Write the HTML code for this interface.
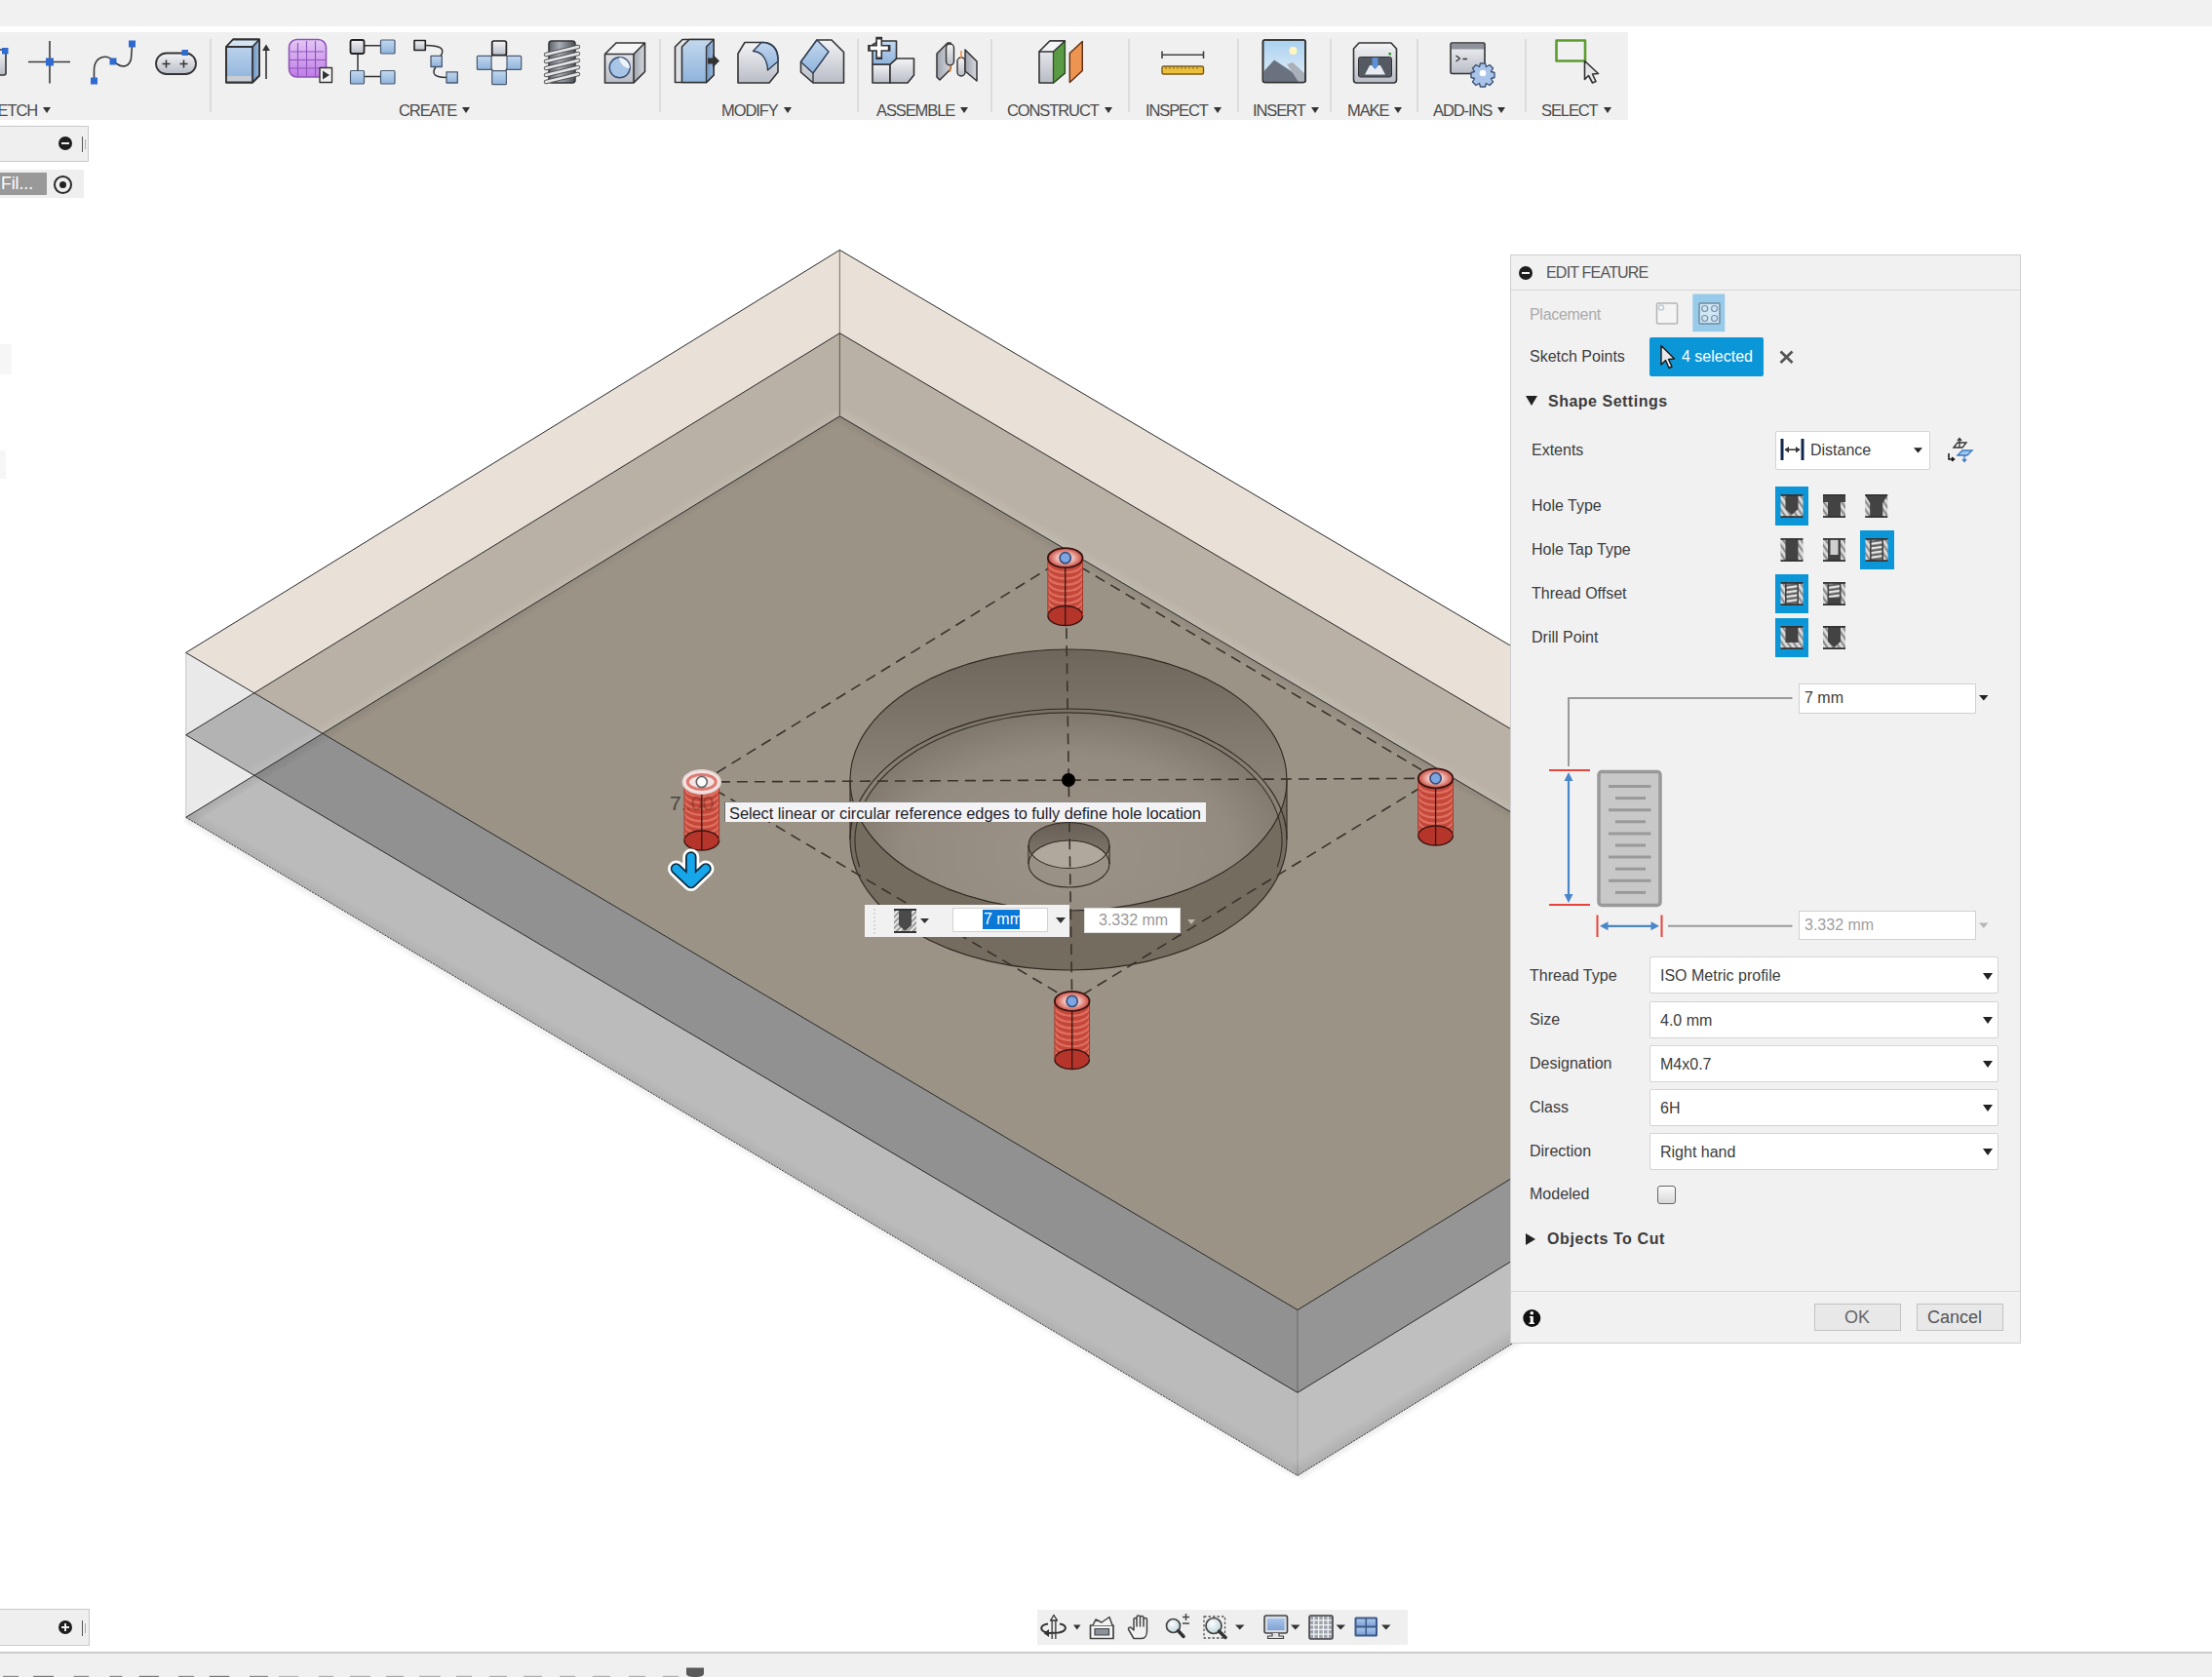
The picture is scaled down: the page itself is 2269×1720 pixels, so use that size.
<!DOCTYPE html>
<html><head><meta charset="utf-8">
<style>
html,body{margin:0;padding:0;}
body{width:2269px;height:1720px;overflow:hidden;position:relative;background:#ffffff;font-family:"Liberation Sans",sans-serif;}
.a{position:absolute;}
.topbar{left:0;top:0;width:2269px;height:27px;background:#f1f1f1;}
.tb{left:0;top:33px;width:1670px;height:90px;background:#f0f0f0;}
.sep{position:absolute;top:40px;width:2px;height:75px;background:#dcdcdc;}
.lbl{position:absolute;top:104px;font-size:16.5px;color:#4a4a4a;white-space:nowrap;letter-spacing:-1.1px;line-height:18px;}
.tri{display:inline-block;width:0;height:0;border-left:4.5px solid transparent;border-right:4.5px solid transparent;border-top:6px solid #333;margin-left:6px;vertical-align:3px;}
.dlg{left:1549px;top:261px;width:524px;height:1117px;background:#f1f1f1;border:1px solid #cfcfcf;box-sizing:border-box;}
.dl{position:absolute;font-size:16px;color:#3c3c3c;white-space:nowrap;line-height:18px;}
.dd{position:absolute;left:1692px;width:358px;height:38px;background:#fff;border:1px solid #d4d4d4;box-sizing:border-box;border-radius:2px;}
.dd span{position:absolute;left:10px;top:10px;font-size:16px;color:#3c3c3c;line-height:18px;}
.dtri{position:absolute;width:0;height:0;border-left:5px solid transparent;border-right:5px solid transparent;border-top:7px solid #222;}
</style></head>
<body>
<div class="a topbar"></div>
<div class="a tb"></div>
<div class="sep" style="left:215px"></div>
<div class="sep" style="left:676px"></div>
<div class="sep" style="left:879px"></div>
<div class="sep" style="left:1016px"></div>
<div class="sep" style="left:1157px"></div>
<div class="sep" style="left:1269px"></div>
<div class="sep" style="left:1364px"></div>
<div class="sep" style="left:1453px"></div>
<div class="sep" style="left:1564px"></div>

<div class="lbl" style="left:-2.5px">ETCH<i class="tri"></i></div>
<div class="lbl" style="left:409px">CREATE<i class="tri"></i></div>
<div class="lbl" style="left:740px">MODIFY<i class="tri"></i></div>
<div class="lbl" style="left:899px">ASSEMBLE<i class="tri"></i></div>
<div class="lbl" style="left:1033px">CONSTRUCT<i class="tri"></i></div>
<div class="lbl" style="left:1175px">INSPECT<i class="tri"></i></div>
<div class="lbl" style="left:1285px">INSERT<i class="tri"></i></div>
<div class="lbl" style="left:1382px">MAKE<i class="tri"></i></div>
<div class="lbl" style="left:1470px">ADD-INS<i class="tri"></i></div>
<div class="lbl" style="left:1581px">SELECT<i class="tri"></i></div>

<svg class="a" style="left:0;top:0" width="1670" height="100" viewBox="0 0 1670 100">
<defs>
 <linearGradient id="gb" x1="0" y1="0" x2="0" y2="1"><stop offset="0" stop-color="#c3d8ee"/><stop offset="1" stop-color="#8fb3dc"/></linearGradient>
 <linearGradient id="gbs" x1="0" y1="0" x2="1" y2="0"><stop offset="0" stop-color="#6f93c0"/><stop offset="1" stop-color="#9dbbe0"/></linearGradient>
 <linearGradient id="gg" x1="0" y1="0" x2="0" y2="1"><stop offset="0" stop-color="#f4f4f6"/><stop offset="1" stop-color="#b8bcc6"/></linearGradient>
 <linearGradient id="ggs" x1="0" y1="0" x2="1" y2="0"><stop offset="0" stop-color="#9ea3ad"/><stop offset="1" stop-color="#d8dae0"/></linearGradient>
 <linearGradient id="gp" x1="0" y1="0" x2="0" y2="1"><stop offset="0" stop-color="#e3c8f5"/><stop offset="1" stop-color="#c07be8"/></linearGradient>
 <linearGradient id="gd" x1="0" y1="0" x2="1" y2="0"><stop offset="0" stop-color="#5a5f68"/><stop offset="0.4" stop-color="#a8adb6"/><stop offset="1" stop-color="#4b4f56"/></linearGradient>
 <linearGradient id="gsky" x1="0" y1="0" x2="0" y2="1"><stop offset="0" stop-color="#a9d1f0"/><stop offset="1" stop-color="#e6f0f8"/></linearGradient>
</defs>
<g stroke-linejoin="round">
<!-- partial sketch icon -->
<rect x="-10" y="51" width="16" height="26" rx="2" fill="url(#gg)" stroke="#333" stroke-width="1.6"/>
<rect x="2" y="49" width="6.5" height="6.5" fill="#2f6ad0"/>
<!-- point -->
<line x1="29" y1="63.5" x2="72" y2="63.5" stroke="#3a3a3a" stroke-width="1.6"/>
<line x1="51" y1="42" x2="51" y2="85.5" stroke="#3a3a3a" stroke-width="1.6"/>
<rect x="47" y="59.5" width="8" height="8" fill="#2f6ad0"/>
<!-- spline -->
<path d="M96.5,83 L96.5,72 C96.5,62 103,57 110,58.5 C114,59.5 116,62 120,65.5 C126,70 133,68 134.5,60 L135.6,45" fill="none" stroke="#3a3a3a" stroke-width="1.6"/>
<rect x="93" y="79.5" width="7" height="7" fill="#2f6ad0"/>
<rect x="112.5" y="59.5" width="7" height="7" fill="#2f6ad0"/>
<rect x="132" y="41.5" width="7" height="7" fill="#2f6ad0"/>
<!-- slot -->
<rect x="160" y="54.5" width="41" height="21.5" rx="10.7" fill="url(#gg)" stroke="#333" stroke-width="1.8"/>
<path d="M166.5,65.5 h8 M170.5,61.5 v8 M184.5,65.5 h8 M188.5,61.5 v8" stroke="#333" stroke-width="1.5"/>
<rect x="186.5" y="51" width="6.5" height="6" fill="#2f6ad0"/>
<!-- extrude -->
<path d="M232,48 L239,40.5 L266,40.5 L266,77.5 L259,84.5 L232,84.5 Z" fill="url(#gb)" stroke="#333" stroke-width="1.8"/>
<path d="M232,48 L239,40.5 L266,40.5 L259,48 Z" fill="#d4e3f3"/>
<path d="M259,48 L266,40.5 L266,77.5 L259,84.5 Z" fill="url(#gbs)"/>
<path d="M232,78 L259,78 L259,84.5 L232,84.5 Z" fill="#c9cdd4"/>
<path d="M232,48 L239,40.5 L266,40.5 L266,77.5 L259,84.5 L232,84.5 Z M232,48 L259,48 L266,40.5 M259,48 L259,84.5" fill="none" stroke="#333" stroke-width="1.8"/>
<path d="M273,81 L273,47.5" stroke="#333" stroke-width="1.6"/><path d="M269,52 L273,45.5 L277,52 Z" fill="#333"/>
<!-- form -->
<rect x="296.5" y="40.5" width="38" height="38.5" rx="8" fill="url(#gp)" stroke="#8e55b8" stroke-width="1.6"/>
<path d="M305.5,44 v34 M314.5,42 v37 M323.5,42 v37 M298,53 h34 M297,61.5 h37 M297,70 h37" stroke="#8e55b8" stroke-width="1.1"/>
<rect x="328" y="69.5" width="12.5" height="15" fill="#f1f1f1" stroke="#333" stroke-width="1.4"/>
<path d="M331,72.5 L338,77 L331,81.5 Z" fill="#333"/>
<!-- rect pattern -->
<path d="M373,46.8 H391 M367,55 V73 M373,78.5 H391" stroke="#333" stroke-width="1.5"/>
<rect x="359.5" y="41" width="14" height="14" rx="2" fill="url(#gg)" stroke="#222" stroke-width="1.8"/>
<rect x="390.5" y="41" width="14.5" height="14" rx="1" fill="url(#gb)" stroke="#4a5a70" stroke-width="1.2"/>
<rect x="359.5" y="72.5" width="14" height="13.5" rx="1" fill="url(#gb)" stroke="#4a5a70" stroke-width="1.2"/>
<rect x="390.5" y="72.5" width="14.5" height="13.5" rx="1" fill="url(#gb)" stroke="#4a5a70" stroke-width="1.2"/>
<!-- path pattern -->
<path d="M436,46.5 C452,46.5 457,50 452,57.5 M447,68.5 C442,76 446,79.5 458,79.5" fill="none" stroke="#333" stroke-width="1.5"/>
<rect x="425" y="41.5" width="11.3" height="10" fill="url(#gg)" stroke="#222" stroke-width="1.6"/>
<rect x="442" y="57.3" width="11.3" height="11.2" fill="url(#gb)" stroke="#4a5a70" stroke-width="1.3"/>
<rect x="458" y="73.8" width="11.3" height="11.2" fill="url(#gb)" stroke="#4a5a70" stroke-width="1.3"/>
<!-- circular pattern -->
<path d="M512,50 L527,64 L512,79 L497,64 Z" fill="none" stroke="#333" stroke-width="1.5"/>
<rect x="504.7" y="42" width="14.7" height="14.7" rx="2" fill="url(#gg)" stroke="#222" stroke-width="1.7"/>
<rect x="489.4" y="57.3" width="14.7" height="14.1" rx="1" fill="url(#gb)" stroke="#4a5a70" stroke-width="1.2"/>
<rect x="520" y="57.3" width="14.7" height="14.1" rx="1" fill="url(#gb)" stroke="#4a5a70" stroke-width="1.2"/>
<rect x="504.7" y="72.6" width="14.7" height="14.1" rx="1" fill="url(#gb)" stroke="#4a5a70" stroke-width="1.2"/>
<!-- coil -->
<rect x="563" y="42" width="27" height="43" rx="3" fill="url(#gd)" stroke="#333" stroke-width="1.5"/>
<path d="M560,56 L593,48 M560,63 L593,55 M560,70 L593,62 M560,77 L593,69 M560,84 L593,76" stroke="#555" stroke-width="4.5" stroke-linecap="round"/>
<path d="M560,56 L593,48 M560,63 L593,55 M560,70 L593,62 M560,77 L593,69 M560,84 L593,76" stroke="#e4e6ea" stroke-width="2.6" stroke-linecap="round"/>
<!-- hole cube -->
<path d="M620.5,55.5 L632,44 L661.5,44 L661.5,73.5 L650,85 L620.5,85 Z" fill="url(#gg)"/>
<path d="M650,55.5 L661.5,44 L661.5,73.5 L650,85 Z" fill="url(#ggs)"/>
<path d="M620.5,55.5 L632,44 L661.5,44 L650,55.5 Z" fill="#f6f6f8"/>
<path d="M620.5,55.5 L632,44 L661.5,44 L661.5,73.5 L650,85 L620.5,85 Z M620.5,55.5 L650,55.5 L661.5,44 M650,55.5 V85" fill="none" stroke="#333" stroke-width="1.6"/>
<circle cx="635.7" cy="69.3" r="10.5" fill="#a9c5e6" stroke="#3c5378" stroke-width="1.5"/>
<path d="M635,59 C641,59 646,64 646,70 C641,70 636,66 635,59 Z" fill="#eef3f9"/>
<!-- press pull -->
<path d="M692.5,48 L700,40.5 L732,40.5 L732,77 L724.5,84.5 L692.5,84.5 Z" fill="#dfe1e5" stroke="#333" stroke-width="1.6"/>
<path d="M699.5,48 L707,40.5 L732,40.5 L732,77 L724.5,84.5 L699.5,84.5 Z" fill="url(#gb)" stroke="#333" stroke-width="1.6"/>
<path d="M724.5,48 L732,40.5 L732,77 L724.5,84.5 Z" fill="url(#gbs)" stroke="#333" stroke-width="1.3"/>
<path d="M726,59.5 H731 V55.5 L738,62.5 L731,69.5 V65.5 H726 Z" fill="#333"/>
<!-- fillet -->
<path d="M757,55 L764,43.5 L783,43.5 C792,43.5 798,50 798,60 L798,74 L789,85 L757,85 Z" fill="url(#gg)" stroke="#333" stroke-width="1.6"/>
<path d="M772.5,52.5 L781,43.5 C792,43.5 798,50 798,63 L787.5,72 C787,60 781,53 772.5,52.5 Z" fill="url(#gb)" stroke="#2f3f58" stroke-width="1.4"/>
<!-- chamfer -->
<path d="M821.5,63.5 L838,41 L853,41 L865.5,53.5 L865.5,85 L834,85 L821.5,74 Z" fill="url(#gg)" stroke="#333" stroke-width="1.6"/>
<path d="M821.5,63.5 L838,41 L850,53 L834,75 Z" fill="url(#gb)" stroke="#2f3f58" stroke-width="1.4"/>
<path d="M834,75 V85" stroke="#333" stroke-width="1.3"/>
<!-- new component -->
<path d="M895,66 L913,66 L913,85 L895,85 Z" fill="url(#gg)" stroke="#333" stroke-width="1.6"/>
<path d="M913,66 L920,60 L937.5,60 L937.5,77 L931,85 L913,85 Z" fill="url(#gg)" stroke="#333" stroke-width="1.6"/>
<path d="M895,46 L902,42 L919.5,42 L919.5,60 L913,66 L895,66 Z" fill="url(#gb)" stroke="#333" stroke-width="1.6"/>
<path d="M893.5,49.4 H910 M901.7,41.2 V57.6" stroke="#333" stroke-width="6.8" stroke-linecap="square"/>
<path d="M894.5,49.4 H909 M901.7,42.2 V56.6" stroke="#fff" stroke-width="3.6" stroke-linecap="square"/>
<!-- joint -->
<path d="M961,79 L961,55 L972,44 L975,44 L975,71 L964,82 Z" fill="url(#ggs)" stroke="#333" stroke-width="1.5"/>
<rect x="970.5" y="45" width="8" height="22" rx="4" fill="url(#gg)" stroke="#333" stroke-width="1.4"/>
<rect x="982" y="59" width="8" height="19" rx="4" fill="url(#gg)" stroke="#333" stroke-width="1.4"/>
<path d="M990,51 L1002,63 L1002,83 L990,73 Z" fill="url(#ggs)" stroke="#333" stroke-width="1.5"/>
<path d="M974.5,67 V74 M986,52 V60" stroke="#f08a30" stroke-width="1.5"/>
<!-- construct -->
<path d="M1066,53 L1077,42 L1092.3,42 L1092.3,75 L1080.5,85 L1066,85 Z" fill="url(#gg)" stroke="#333" stroke-width="1.6"/>
<path d="M1080.5,53 L1092.3,42 L1092.3,75 L1080.5,85 Z" fill="#5a9a45" stroke="#2f4f25" stroke-width="1.3"/>
<path d="M1066,53 L1077,42 L1092.3,42 L1080.5,53 Z" fill="#f4f4f6" stroke="#333" stroke-width="1.3"/>
<path d="M1097.3,54.5 L1110.3,42.5 L1110.3,72.5 L1097.3,84.5 Z" fill="#ec9450" stroke="#5a2f18" stroke-width="1.4"/>
<!-- measure -->
<path d="M1192,56.2 H1234.5 M1192,52.5 V60 M1234.5,52.5 V60" stroke="#444" stroke-width="1.6"/>
<rect x="1192" y="68" width="42.5" height="8" rx="1.5" fill="#ecc03a" stroke="#7a5a18" stroke-width="1.4"/>
<path d="M1196,68.5 v2.5 M1200,68.5 v2.5 M1204,68.5 v2.5 M1208,68.5 v2.5 M1212,68.5 v2.5 M1216,68.5 v2.5 M1220,68.5 v2.5 M1224,68.5 v2.5 M1228,68.5 v2.5" stroke="#8a6a20" stroke-width="1"/>
<!-- insert picture -->
<rect x="1295.5" y="41" width="43.5" height="43.5" rx="2" fill="url(#gsky)" stroke="#333" stroke-width="1.6"/>
<circle cx="1326.5" cy="52" r="4" fill="#fff5c0"/>
<path d="M1296.5,73 L1307,61.5 L1323,72 L1338,84 L1296.5,84 Z" fill="#6a7280"/>
<path d="M1320,66 L1326,64 L1338,75 L1338,84 L1332,84 Z" fill="#aab0ba"/>
<rect x="1295.5" y="41" width="43.5" height="43.5" rx="2" fill="none" stroke="#333" stroke-width="1.6"/>
<!-- make -->
<path d="M1388.5,50 L1394,44 L1427,44 L1432.5,50 L1432.5,82 Q1432.5,85 1429.5,85 L1391.5,85 Q1388.5,85 1388.5,82 Z" fill="url(#gg)" stroke="#333" stroke-width="1.6"/>
<rect x="1393.5" y="58.5" width="34" height="20.5" rx="2" fill="#555a62" stroke="#333" stroke-width="1"/>
<path d="M1400,76.5 L1405,67 L1416,67 L1421,76.5 Z" fill="#e8ecf2"/>
<path d="M1407.5,59 h6 v9 l-3,3 l-3,-3 Z" fill="#5c8fd6"/>
<rect x="1424.5" y="54" width="2.5" height="2.5" fill="#2a9a2a"/>
<!-- addins -->
<rect x="1488" y="44" width="35" height="31.5" rx="1.5" fill="url(#gg)" stroke="#333" stroke-width="1.6"/>
<rect x="1489" y="45" width="33" height="5.5" fill="#8d929b"/>
<path d="M1493.5,57 L1497.5,60 L1493.5,63 M1500.5,60.5 h4.5" fill="none" stroke="#333" stroke-width="1.3"/>
<g transform="translate(1521,75)">
<path d="M-2.5,-10 h5 l1,3.5 l3.5,-2 l3.5,3.5 l-2,3.5 l3.5,1 v5 l-3.5,1 l2,3.5 l-3.5,3.5 l-3.5,-2 l-1,3.5 h-5 l-1,-3.5 l-3.5,2 l-3.5,-3.5 l2,-3.5 l-3.5,-1 v-5 l3.5,-1 l-2,-3.5 l3.5,-3.5 l3.5,2 Z" fill="#a9c4e8" stroke="#3c5378" stroke-width="1.4"/>
<circle r="3.3" fill="#fff"/>
</g>
<!-- select -->
<rect x="1596.5" y="41.5" width="29.5" height="21" fill="none" stroke="#5c9c2e" stroke-width="2.6"/>
<path d="M1625.5,62.5 L1625.5,81.5 L1629.5,77.5 L1633.5,85 L1637,83.5 L1633.5,76 L1639.5,75.5 Z" fill="#e6e6ea" stroke="#333" stroke-width="1.6"/>
</g>
</svg>


<!-- left panels -->
<div class="a" style="left:-1px;top:129px;width:92px;height:37px;background:#efefef;border:1px solid #c9c9c9;box-sizing:border-box;"></div>
<div class="a" style="left:60px;top:140px;width:14px;height:14px;border-radius:50%;background:#1e1e1e;"></div>
<div class="a" style="left:63px;top:146px;width:8px;height:2px;background:#efefef;"></div>
<div class="a" style="left:84px;top:140px;width:1px;height:16px;background:#555;"></div>
<div class="a" style="left:87px;top:143px;width:1px;height:10px;background:#aaa;"></div>
<div class="a" style="left:0;top:174px;width:86px;height:29px;background:#efefef;"></div>
<div class="a" style="left:0;top:177px;width:48px;height:23px;background:#999999;"></div>
<div class="a" style="left:1px;top:179px;font-size:17.5px;color:#fff;line-height:18px;">Fil...</div>
<div class="a" style="left:54.5px;top:179.5px;width:19px;height:19px;border-radius:50%;border:2px solid #2a2a2a;box-sizing:border-box;"></div>
<div class="a" style="left:60.5px;top:185.5px;width:7px;height:7px;border-radius:50%;background:#222;"></div>
<div class="a" style="left:0;top:353px;width:12px;height:31px;background:#f6f6f6;"></div>
<div class="a" style="left:0;top:462px;width:6px;height:29px;background:#f6f6f6;"></div>

<!-- model -->
<svg class="a" style="left:0;top:0" width="2269" height="1720" viewBox="0 0 2269 1720">
<polygon points="190.7,669.4 861.4,256.4 2003.4,930.0 2003.4,1100.4 1331.0,1513.4 190.7,838.3" fill="#e9e9e9"/>
<polygon points="190.7,669.4 861.4,256.4 2003.4,930.0 1331.0,1343.5" fill="#e9e1d8"/>
<polygon points="190.7,753.8 861.4,341.7 1331.0,618.6 1331.0,1428.3 1331.0,1428.3" fill="#b3b3b3"/>
<polygon points="1331.0,1428.3 1331.0,618.6 2003.4,1015.2 1331.0,1428.3" fill="#b3b3b3"/>
<polygon points="190.7,838.3 861.4,426.8 1331.0,703.8 1331.0,1513.4 1331.0,1513.4" fill="#bbbbbb"/>
<polygon points="1331.0,1513.4 1331.0,703.8 2003.4,1100.4 1331.0,1513.4" fill="#bfbfbf"/>
<polygon points="260.7,710.8 861.4,341.7 1932.7,973.5 1331.0,1343.5" fill="#b9b1a5"/>
<polygon points="260.8,795.3 861.4,426.8 1331.0,703.8 1331.0,1428.3 1331.0,1428.3" fill="#919191"/>
<polygon points="1331.0,1428.3 1331.0,703.8 1932.6,1058.7 1331.0,1428.3" fill="#959595"/>
<polygon points="330.9,752.3 861.4,426.8 1862.0,1017.0 1331.0,1343.5" fill="#9b9386"/>
<line x1="190.7" y1="669.4" x2="190.7" y2="838.3" stroke="#cfcfcf" stroke-width="1.2"/>
<line x1="861.4" y1="256.4" x2="861.4" y2="341.7" stroke="#8a8176" stroke-width="1.2"/>
<line x1="861.4" y1="341.7" x2="861.4" y2="426.8" stroke="#6e665c" stroke-width="1.2"/>
<line x1="1331.0" y1="1343.5" x2="1331.0" y2="1428.3" stroke="#6f6f6f" stroke-width="1.2"/>
<line x1="1331.0" y1="1428.3" x2="1331.0" y2="1513.4" stroke="#a8a8a8" stroke-width="1.2"/>
<linearGradient id="bs1" gradientUnits="userSpaceOnUse" x1="760.9" y1="1175.8" x2="767.0" y2="1165.5"><stop offset="0" stop-color="#000" stop-opacity="0.06"/><stop offset="1" stop-color="#000" stop-opacity="0"/></linearGradient>
<polygon points="190.7,838.3 1331.0,1513.4 1337.1,1503.1 196.8,828.0" fill="url(#bs1)"/>
<linearGradient id="bs2" gradientUnits="userSpaceOnUse" x1="1667.2" y1="1306.9" x2="1658.8" y2="1293.3"><stop offset="0" stop-color="#000" stop-opacity="0.09"/><stop offset="1" stop-color="#000" stop-opacity="0"/></linearGradient>
<polygon points="1331.0,1513.4 2003.4,1100.4 1995.0,1086.8 1322.6,1499.8" fill="url(#bs2)"/>
<linearGradient id="os1" gradientUnits="userSpaceOnUse" x1="760.9" y1="1175.8" x2="757.3" y2="1181.9"><stop offset="0" stop-color="#000" stop-opacity="0.07"/><stop offset="1" stop-color="#000" stop-opacity="0"/></linearGradient>
<polygon points="190.7,838.3 1331.0,1513.4 1327.4,1519.4 187.1,844.3" fill="url(#os1)"/>
<linearGradient id="os2" gradientUnits="userSpaceOnUse" x1="1667.2" y1="1306.9" x2="1670.9" y2="1312.9"><stop offset="0" stop-color="#000" stop-opacity="0.08"/><stop offset="1" stop-color="#000" stop-opacity="0"/></linearGradient>
<polygon points="1331.0,1513.4 2003.4,1100.4 2007.1,1106.4 1334.7,1519.4" fill="url(#os2)"/>
<linearGradient id="ao1" gradientUnits="userSpaceOnUse" x1="526.0" y1="632.5" x2="530.8" y2="640.2"><stop offset="0" stop-color="#000" stop-opacity="0.07"/><stop offset="1" stop-color="#000" stop-opacity="0"/></linearGradient>
<polygon points="190.7,838.3 861.4,426.8 866.1,434.5 195.4,846.0" fill="url(#ao1)"/>
<linearGradient id="gl1" gradientUnits="userSpaceOnUse" x1="526.0" y1="632.5" x2="520.8" y2="624.0"><stop offset="0" stop-color="#fff" stop-opacity="0.10"/><stop offset="1" stop-color="#fff" stop-opacity="0"/></linearGradient>
<polygon points="190.7,838.3 861.4,426.8 856.2,418.3 185.5,829.8" fill="url(#gl1)"/>
<linearGradient id="gl2" gradientUnits="userSpaceOnUse" x1="1432.4" y1="763.6" x2="1437.5" y2="755.0"><stop offset="0" stop-color="#fff" stop-opacity="0.10"/><stop offset="1" stop-color="#fff" stop-opacity="0"/></linearGradient>
<polygon points="861.4,426.8 2003.4,1100.4 2008.5,1091.8 866.5,418.2" fill="url(#gl2)"/>
<linearGradient id="ao2" gradientUnits="userSpaceOnUse" x1="1432.4" y1="763.6" x2="1427.8" y2="771.4"><stop offset="0" stop-color="#000" stop-opacity="0.07"/><stop offset="1" stop-color="#000" stop-opacity="0"/></linearGradient>
<polygon points="861.4,426.8 2003.4,1100.4 1998.8,1108.2 856.8,434.6" fill="url(#ao2)"/>
<line x1="190.7" y1="669.4" x2="861.4" y2="256.4" stroke="#2a2a2a" stroke-width="1.0"/>
<line x1="861.4" y1="256.4" x2="2003.4" y2="930.0" stroke="#2a2a2a" stroke-width="1.0"/>
<line x1="2003.4" y1="930.0" x2="1331.0" y2="1343.5" stroke="#2a2a2a" stroke-width="1.0"/>
<line x1="1331.0" y1="1343.5" x2="190.7" y2="669.4" stroke="#2a2a2a" stroke-width="1.0"/>
<line x1="190.7" y1="753.8" x2="861.4" y2="341.7" stroke="#2a2a2a" stroke-width="1.0"/>
<line x1="861.4" y1="341.7" x2="2003.4" y2="1015.2" stroke="#2a2a2a" stroke-width="1.0"/>
<line x1="2003.4" y1="1015.2" x2="1331.0" y2="1428.3" stroke="#2a2a2a" stroke-width="1.0"/>
<line x1="1331.0" y1="1428.3" x2="190.7" y2="753.8" stroke="#2a2a2a" stroke-width="1.0"/>
<line x1="190.7" y1="838.3" x2="861.4" y2="426.8" stroke="#2a2a2a" stroke-width="1.0"/>
<line x1="861.4" y1="426.8" x2="2003.4" y2="1100.4" stroke="#2a2a2a" stroke-width="1.0"/>
<line x1="190.7" y1="838.3" x2="1331.0" y2="1513.4" stroke="#3a3a3a" stroke-width="1.0" stroke-dasharray="2 1.2"/>
<line x1="1331.0" y1="1513.4" x2="2003.4" y2="1100.4" stroke="#3a3a3a" stroke-width="1.0" stroke-dasharray="2 1.2"/>
<defs>
<linearGradient id="bw" x1="0" y1="0" x2="0" y2="1">
 <stop offset="0" stop-color="#6e665b"/><stop offset="0.25" stop-color="#7c7468"/><stop offset="0.5" stop-color="#8a8276"/><stop offset="1" stop-color="#8a8276"/>
</linearGradient>
<radialGradient id="pf" cx="0.5" cy="0.55" r="0.55">
 <stop offset="0" stop-color="#9b9388"/><stop offset="0.7" stop-color="#938b7f"/><stop offset="1" stop-color="#7f776b"/>
</radialGradient>
<linearGradient id="sh" x1="0" y1="0" x2="0" y2="1">
 <stop offset="0" stop-color="#675f55"/><stop offset="1" stop-color="#857d71"/>
</linearGradient>
<pattern id="thr" patternUnits="userSpaceOnUse" width="40" height="6.2">
 <rect width="40" height="6.2" fill="#c2493b"/><rect y="3.6" width="40" height="2.6" fill="#d9695a"/>
</pattern>
<clipPath id="cE0"><ellipse cx="1096" cy="800" rx="224" ry="134"/></clipPath>
</defs>
<ellipse cx="1096" cy="861" rx="224" ry="134" fill="#756c60"/>
<rect x="872" y="800" width="448" height="61" fill="#756c60"/>
<ellipse cx="1096" cy="800" rx="224" ry="134" fill="url(#bw)"/>
<g clip-path="url(#cE0)"><ellipse cx="1096" cy="862" rx="219" ry="131" fill="url(#pf)"/></g>
<ellipse cx="1096.5" cy="867" rx="41.5" ry="23.5" fill="url(#sh)"/>
<clipPath id="cS0"><ellipse cx="1096.5" cy="867" rx="41.5" ry="23.5"/></clipPath>
<ellipse cx="1096.5" cy="886" rx="41.5" ry="24" fill="#b0a89c" clip-path="url(#cS0)"/>
<ellipse cx="1096" cy="800" rx="224" ry="134" fill="none" stroke="#2e2922" stroke-width="1.1"/>
<ellipse cx="1096" cy="861" rx="224" ry="134" fill="none" stroke="#2e2922" stroke-width="1.1"/>
<line x1="872" y1="800" x2="872" y2="861" fill="none" stroke="#2e2922" stroke-width="1.1"/>
<line x1="1320" y1="800" x2="1320" y2="861" fill="none" stroke="#2e2922" stroke-width="1.1"/>
<path d="M881.8,889.2 A219,131 0 1 1 1310.2,889.2" fill="none" stroke="#2e2922" stroke-width="1.1" opacity="0.9"/>
<ellipse cx="1096.5" cy="867" rx="41.5" ry="23.5" fill="none" stroke="#2e2922" stroke-width="1.1"/>
<path d="M1055,867 L1055,886 A41.5,24 0 0 0 1138,886 L1138,867" fill="none" stroke="#2e2922" stroke-width="1.1"/>
<path d="M1055,886 A41.5,24 0 0 1 1138,886" fill="none" stroke="#2e2922" stroke-width="1.1"/>
<line x1="719.9" y1="802.0" x2="1092.8" y2="572.3" stroke="#39332c" stroke-width="1.6" stroke-dasharray="11 7" fill="none"/>
<line x1="1092.8" y1="572.3" x2="1472.6" y2="798.3" stroke="#39332c" stroke-width="1.6" stroke-dasharray="11 7" fill="none"/>
<line x1="1472.6" y1="798.3" x2="1099.7" y2="1026.9" stroke="#39332c" stroke-width="1.6" stroke-dasharray="11 7" fill="none"/>
<line x1="1099.7" y1="1026.9" x2="719.9" y2="802.0" stroke="#39332c" stroke-width="1.6" stroke-dasharray="11 7" fill="none"/>
<line x1="719.9" y1="802.0" x2="1472.6" y2="798.3" stroke="#39332c" stroke-width="1.6" stroke-dasharray="11 7" fill="none"/>
<line x1="1092.8" y1="572.3" x2="1099.7" y2="1026.9" stroke="#39332c" stroke-width="1.6" stroke-dasharray="11 7" fill="none"/>
<circle cx="1096" cy="800" r="7" fill="#000"/>
<clipPath id="hc1092"><rect x="1074.9" y="572.2" width="35.6" height="59.3"/><ellipse cx="1092.7" cy="631.5" rx="17.8" ry="10.0"/></clipPath>
<g clip-path="url(#hc1092)"><rect x="1073.9" y="572.2" width="37.6" height="70.3" fill="#c4473a"/>
<path d="M1074.9,578.2 A17.8,9.0 0 0 0 1110.5,578.2" fill="none" stroke="#de6e5e" stroke-width="2.4"/>
<path d="M1074.9,584.5 A17.8,9.0 0 0 0 1110.5,584.5" fill="none" stroke="#de6e5e" stroke-width="2.4"/>
<path d="M1074.9,590.8 A17.8,9.0 0 0 0 1110.5,590.8" fill="none" stroke="#de6e5e" stroke-width="2.4"/>
<path d="M1074.9,597.1 A17.8,9.0 0 0 0 1110.5,597.1" fill="none" stroke="#de6e5e" stroke-width="2.4"/>
<path d="M1074.9,603.4 A17.8,9.0 0 0 0 1110.5,603.4" fill="none" stroke="#de6e5e" stroke-width="2.4"/>
<path d="M1074.9,609.7 A17.8,9.0 0 0 0 1110.5,609.7" fill="none" stroke="#de6e5e" stroke-width="2.4"/>
<path d="M1074.9,616.0 A17.8,9.0 0 0 0 1110.5,616.0" fill="none" stroke="#de6e5e" stroke-width="2.4"/>
<path d="M1074.9,622.3 A17.8,9.0 0 0 0 1110.5,622.3" fill="none" stroke="#de6e5e" stroke-width="2.4"/>
<path d="M1074.9,628.6 A17.8,9.0 0 0 0 1110.5,628.6" fill="none" stroke="#de6e5e" stroke-width="2.4"/>
<path d="M1074.9,634.9 A17.8,9.0 0 0 0 1110.5,634.9" fill="none" stroke="#de6e5e" stroke-width="2.4"/>
</g>
<ellipse cx="1092.7" cy="631.5" rx="17.8" ry="10.0" fill="#b5352b" stroke="#3a1410" stroke-width="1.4"/>
<line x1="1092.7" y1="582.2" x2="1092.7" y2="641.5" stroke="#3a1410" stroke-width="1.3"/>
<line x1="1074.9" y1="572.2" x2="1074.9" y2="631.5" stroke="#a8382c" stroke-width="1"/>
<line x1="1110.5" y1="572.2" x2="1110.5" y2="631.5" stroke="#a8382c" stroke-width="1"/>
<radialGradient id="tg1092"><stop offset="0" stop-color="#f6d8d4"/><stop offset="0.45" stop-color="#f0c0ba"/><stop offset="1" stop-color="#cc4a3e"/></radialGradient>
<ellipse cx="1092.7" cy="572.2" rx="17.8" ry="10.0" fill="url(#tg1092)" stroke="#3a1410" stroke-width="1.8"/>
<circle cx="1092.7" cy="572.2" r="5.6" fill="#7ba6e2" stroke="#3b4f7a" stroke-width="1.7"/>
<clipPath id="hc1472"><rect x="1454.8" y="798.3" width="35.6" height="58.7"/><ellipse cx="1472.6" cy="857.0" rx="17.8" ry="10.0"/></clipPath>
<g clip-path="url(#hc1472)"><rect x="1453.8" y="798.3" width="37.6" height="69.7" fill="#c4473a"/>
<path d="M1454.8,804.3 A17.8,9.0 0 0 0 1490.4,804.3" fill="none" stroke="#de6e5e" stroke-width="2.4"/>
<path d="M1454.8,810.6 A17.8,9.0 0 0 0 1490.4,810.6" fill="none" stroke="#de6e5e" stroke-width="2.4"/>
<path d="M1454.8,816.9 A17.8,9.0 0 0 0 1490.4,816.9" fill="none" stroke="#de6e5e" stroke-width="2.4"/>
<path d="M1454.8,823.2 A17.8,9.0 0 0 0 1490.4,823.2" fill="none" stroke="#de6e5e" stroke-width="2.4"/>
<path d="M1454.8,829.5 A17.8,9.0 0 0 0 1490.4,829.5" fill="none" stroke="#de6e5e" stroke-width="2.4"/>
<path d="M1454.8,835.8 A17.8,9.0 0 0 0 1490.4,835.8" fill="none" stroke="#de6e5e" stroke-width="2.4"/>
<path d="M1454.8,842.1 A17.8,9.0 0 0 0 1490.4,842.1" fill="none" stroke="#de6e5e" stroke-width="2.4"/>
<path d="M1454.8,848.4 A17.8,9.0 0 0 0 1490.4,848.4" fill="none" stroke="#de6e5e" stroke-width="2.4"/>
<path d="M1454.8,854.7 A17.8,9.0 0 0 0 1490.4,854.7" fill="none" stroke="#de6e5e" stroke-width="2.4"/>
<path d="M1454.8,861.0 A17.8,9.0 0 0 0 1490.4,861.0" fill="none" stroke="#de6e5e" stroke-width="2.4"/>
</g>
<ellipse cx="1472.6" cy="857.0" rx="17.8" ry="10.0" fill="#b5352b" stroke="#3a1410" stroke-width="1.4"/>
<line x1="1472.6" y1="808.3" x2="1472.6" y2="867.0" stroke="#3a1410" stroke-width="1.3"/>
<line x1="1454.8" y1="798.3" x2="1454.8" y2="857.0" stroke="#a8382c" stroke-width="1"/>
<line x1="1490.4" y1="798.3" x2="1490.4" y2="857.0" stroke="#a8382c" stroke-width="1"/>
<radialGradient id="tg1472"><stop offset="0" stop-color="#f6d8d4"/><stop offset="0.45" stop-color="#f0c0ba"/><stop offset="1" stop-color="#cc4a3e"/></radialGradient>
<ellipse cx="1472.6" cy="798.3" rx="17.8" ry="10.0" fill="url(#tg1472)" stroke="#3a1410" stroke-width="1.8"/>
<circle cx="1472.6" cy="798.3" r="5.6" fill="#7ba6e2" stroke="#3b4f7a" stroke-width="1.7"/>
<clipPath id="hc1099"><rect x="1081.9" y="1026.9" width="35.6" height="59.6"/><ellipse cx="1099.7" cy="1086.5" rx="17.8" ry="10.0"/></clipPath>
<g clip-path="url(#hc1099)"><rect x="1080.9" y="1026.9" width="37.6" height="70.6" fill="#c4473a"/>
<path d="M1081.9,1032.9 A17.8,9.0 0 0 0 1117.5,1032.9" fill="none" stroke="#de6e5e" stroke-width="2.4"/>
<path d="M1081.9,1039.2 A17.8,9.0 0 0 0 1117.5,1039.2" fill="none" stroke="#de6e5e" stroke-width="2.4"/>
<path d="M1081.9,1045.5 A17.8,9.0 0 0 0 1117.5,1045.5" fill="none" stroke="#de6e5e" stroke-width="2.4"/>
<path d="M1081.9,1051.8 A17.8,9.0 0 0 0 1117.5,1051.8" fill="none" stroke="#de6e5e" stroke-width="2.4"/>
<path d="M1081.9,1058.1 A17.8,9.0 0 0 0 1117.5,1058.1" fill="none" stroke="#de6e5e" stroke-width="2.4"/>
<path d="M1081.9,1064.4 A17.8,9.0 0 0 0 1117.5,1064.4" fill="none" stroke="#de6e5e" stroke-width="2.4"/>
<path d="M1081.9,1070.7 A17.8,9.0 0 0 0 1117.5,1070.7" fill="none" stroke="#de6e5e" stroke-width="2.4"/>
<path d="M1081.9,1077.0 A17.8,9.0 0 0 0 1117.5,1077.0" fill="none" stroke="#de6e5e" stroke-width="2.4"/>
<path d="M1081.9,1083.3 A17.8,9.0 0 0 0 1117.5,1083.3" fill="none" stroke="#de6e5e" stroke-width="2.4"/>
<path d="M1081.9,1089.6 A17.8,9.0 0 0 0 1117.5,1089.6" fill="none" stroke="#de6e5e" stroke-width="2.4"/>
</g>
<ellipse cx="1099.7" cy="1086.5" rx="17.8" ry="10.0" fill="#b5352b" stroke="#3a1410" stroke-width="1.4"/>
<line x1="1099.7" y1="1036.9" x2="1099.7" y2="1096.5" stroke="#3a1410" stroke-width="1.3"/>
<line x1="1081.9" y1="1026.9" x2="1081.9" y2="1086.5" stroke="#a8382c" stroke-width="1"/>
<line x1="1117.5" y1="1026.9" x2="1117.5" y2="1086.5" stroke="#a8382c" stroke-width="1"/>
<radialGradient id="tg1099"><stop offset="0" stop-color="#f6d8d4"/><stop offset="0.45" stop-color="#f0c0ba"/><stop offset="1" stop-color="#cc4a3e"/></radialGradient>
<ellipse cx="1099.7" cy="1026.9" rx="17.8" ry="10.0" fill="url(#tg1099)" stroke="#3a1410" stroke-width="1.8"/>
<circle cx="1099.7" cy="1026.9" r="5.6" fill="#7ba6e2" stroke="#3b4f7a" stroke-width="1.7"/>
<text x="687" y="831" font-family="Liberation Sans" font-size="21" fill="#4a4540">7.00</text>
<clipPath id="hc719"><rect x="702.0" y="802.0" width="35.6" height="60.0"/><ellipse cx="719.8" cy="862.0" rx="17.8" ry="10.0"/></clipPath>
<g clip-path="url(#hc719)"><rect x="701.0" y="802.0" width="37.6" height="71.0" fill="#c4473a"/>
<path d="M702.0,808.0 A17.8,9.0 0 0 0 737.6,808.0" fill="none" stroke="#de6e5e" stroke-width="2.4"/>
<path d="M702.0,814.3 A17.8,9.0 0 0 0 737.6,814.3" fill="none" stroke="#de6e5e" stroke-width="2.4"/>
<path d="M702.0,820.6 A17.8,9.0 0 0 0 737.6,820.6" fill="none" stroke="#de6e5e" stroke-width="2.4"/>
<path d="M702.0,826.9 A17.8,9.0 0 0 0 737.6,826.9" fill="none" stroke="#de6e5e" stroke-width="2.4"/>
<path d="M702.0,833.2 A17.8,9.0 0 0 0 737.6,833.2" fill="none" stroke="#de6e5e" stroke-width="2.4"/>
<path d="M702.0,839.5 A17.8,9.0 0 0 0 737.6,839.5" fill="none" stroke="#de6e5e" stroke-width="2.4"/>
<path d="M702.0,845.8 A17.8,9.0 0 0 0 737.6,845.8" fill="none" stroke="#de6e5e" stroke-width="2.4"/>
<path d="M702.0,852.1 A17.8,9.0 0 0 0 737.6,852.1" fill="none" stroke="#de6e5e" stroke-width="2.4"/>
<path d="M702.0,858.4 A17.8,9.0 0 0 0 737.6,858.4" fill="none" stroke="#de6e5e" stroke-width="2.4"/>
<path d="M702.0,864.7 A17.8,9.0 0 0 0 737.6,864.7" fill="none" stroke="#de6e5e" stroke-width="2.4"/>
</g>
<ellipse cx="719.8" cy="862.0" rx="17.8" ry="10.0" fill="#b5352b" stroke="#3a1410" stroke-width="1.4"/>
<line x1="719.8" y1="812.0" x2="719.8" y2="872.0" stroke="#3a1410" stroke-width="1.3"/>
<line x1="702.0" y1="802.0" x2="702.0" y2="862.0" stroke="#a8382c" stroke-width="1"/>
<line x1="737.6" y1="802.0" x2="737.6" y2="862.0" stroke="#a8382c" stroke-width="1"/>
<ellipse cx="719.8" cy="802.0" rx="19.5" ry="12.3" fill="#f3e4e2" stroke="#e2d2d0" stroke-width="1.5"/>
<ellipse cx="719.8" cy="802.0" rx="14.5" ry="7.5" fill="none" stroke="#d65a4e" stroke-width="3" opacity="0.75"/>
<circle cx="719.8" cy="802.0" r="5.5" fill="#fff" stroke="#666" stroke-width="1.6"/>
<path d="M708.8,879 V903 M693.5,891 L708.8,905.5 L724,891" fill="none" stroke="#ffffff" stroke-width="17" stroke-linecap="round" stroke-linejoin="round"/>
<path d="M708.8,879 V903 M693.5,891 L708.8,905.5 L724,891" fill="none" stroke="#0f2a3c" stroke-width="11.5" stroke-linecap="round" stroke-linejoin="round"/>
<path d="M708.8,879 V903 M693.5,891 L708.8,905.5 L724,891" fill="none" stroke="#17a6ea" stroke-width="8" stroke-linecap="round" stroke-linejoin="round"/>
<text x="703" y="831" font-family="Liberation Sans" font-size="21" fill="#6a2a22" opacity="0.45">.00</text>
</svg>

<!-- tooltip -->
<div class="a" style="left:743px;top:822px;width:494px;height:21px;background:#f3f3f5;border-left:1px solid #6a6a6a;border-top:1px solid #8a8a8a;box-sizing:border-box;"></div>
<div class="a" style="left:748px;top:825px;font-size:16.4px;line-height:19px;color:#1e1e2a;white-space:nowrap;letter-spacing:-0.05px;">Select linear or circular reference edges to fully define hole location</div>
<!-- mini toolbar -->
<div class="a" style="left:887px;top:928px;width:210px;height:33px;background:#f1f1f1;"></div>
<div class="a" style="left:896px;top:932px;width:2px;height:26px;background:repeating-linear-gradient(#d6d6d6 0 2px,#f1f1f1 2px 4px);"></div>
<svg class="a" style="left:915px;top:930px" width="42" height="30" viewBox="0 0 42 30">
 <defs><pattern id="hat" patternUnits="userSpaceOnUse" width="4" height="4" patternTransform="rotate(45)"><rect width="4" height="4" fill="#e8e8e8"/><rect width="2" height="4" fill="#9a9a9a"/></pattern></defs>
 <rect x="2" y="2" width="23" height="25" fill="url(#hat)"/>
 <path d="M7,3 L20,3 L20,19 L13.5,25 L7,19 Z" fill="#4a4a4a"/>
 <rect x="2" y="2" width="23" height="2" fill="#333"/>
 <rect x="2" y="25" width="23" height="2" fill="#333"/>
 <path d="M29,12 L38,12 L33.5,17 Z" fill="#333"/>
</svg>
<div class="a" style="left:977px;top:931px;width:98px;height:25px;background:#fff;border:1px solid #d2d2d2;box-sizing:border-box;"></div>
<div class="a" style="left:1008px;top:933px;width:38px;height:20px;background:#0a78d7;"></div>
<div class="a" style="left:1009px;top:934px;font-size:16px;line-height:18px;color:#fff;white-space:nowrap;">7 mm</div>
<div class="a" style="left:1083px;top:941px;width:0;height:0;border-left:5px solid transparent;border-right:5px solid transparent;border-top:6px solid #333;"></div>
<div class="a" style="left:1112px;top:931px;width:99px;height:26px;background:#fff;border:1px solid #dcdcdc;box-sizing:border-box;"></div>
<div class="a" style="left:1127px;top:935px;font-size:16px;line-height:18px;color:#999;white-space:nowrap;">3.332 mm</div>
<div class="a" style="left:1218px;top:943px;width:0;height:0;border-left:4px solid transparent;border-right:4px solid transparent;border-top:5px solid #bdb6ab;"></div>


<!-- dialog -->
<div class="a dlg"></div>
<div class="a" style="left:1550px;top:297px;width:522px;height:1px;background:#d6d6d6;"></div>
<div class="a" style="left:1558px;top:273px;width:14px;height:14px;border-radius:50%;background:#1e1e1e;"></div>
<div class="a" style="left:1561px;top:279px;width:8px;height:2px;background:#f1f1f1;"></div>
<div class="dl" style="left:1586px;top:271px;color:#555;letter-spacing:-0.8px;">EDIT FEATURE</div>

<div class="dl" style="left:1569px;top:314px;color:#ababab;letter-spacing:-0.3px;">Placement</div>
<div class="dl" style="left:1569px;top:357px;">Sketch Points</div>
<div class="a" style="left:1692px;top:346px;width:117px;height:40px;background:#0b96d8;border-radius:2px;"></div>
<div class="dl" style="left:1725px;top:357px;color:#fff;">4 selected</div>

<div class="a" style="left:1565px;top:406px;width:0;height:0;border-left:6px solid transparent;border-right:6px solid transparent;border-top:10px solid #222;"></div>
<div class="dl" style="left:1588px;top:403px;font-weight:bold;letter-spacing:0.5px;">Shape Settings</div>

<div class="dl" style="left:1571px;top:453px;">Extents</div>
<div class="a" style="left:1821px;top:442px;width:159px;height:40px;background:#fff;border:1px solid #d4d4d4;box-sizing:border-box;border-radius:2px;"></div>
<div class="dl" style="left:1857px;top:453px;">Distance</div>

<div class="dl" style="left:1571px;top:510px;">Hole Type</div>
<div class="dl" style="left:1571px;top:555px;">Hole Tap Type</div>
<div class="dl" style="left:1571px;top:600px;">Thread Offset</div>
<div class="dl" style="left:1571px;top:645px;">Drill Point</div>

<div class="a" style="left:1821px;top:499px;width:34px;height:40px;background:#0b96d8;"></div>
<div class="a" style="left:1908px;top:544px;width:35px;height:40px;background:#0b96d8;"></div>
<div class="a" style="left:1821px;top:589px;width:34px;height:40px;background:#0b96d8;"></div>
<div class="a" style="left:1821px;top:634px;width:34px;height:40px;background:#0b96d8;"></div>

<svg class="a" style="left:0;top:0;pointer-events:none" width="2269" height="1720" viewBox="0 0 2269 1720">
<defs>
<pattern id="hh" patternUnits="userSpaceOnUse" width="5" height="5" patternTransform="rotate(-35)">
 <rect width="5" height="5" fill="#dcdcdc"/><rect width="2.2" height="5" fill="#8c8c8c"/>
</pattern>
<pattern id="thd" patternUnits="userSpaceOnUse" width="20" height="4.6" patternTransform="rotate(-8)">
 <rect width="20" height="4.6" fill="#5a5a5a"/><rect y="0.8" width="20" height="2.4" fill="#e6e6e6"/>
</pattern>
</defs>
<g transform="translate(1826.5,507.0)">
<rect x="0" y="1" width="23" height="22" fill="url(#hh)"/>
<path d="M5,1 H18 V15 L11.5,21 L5,15 Z" fill="#434343"/>
<rect x="0" y="0" width="23" height="1.8" fill="#333"/>
<rect x="0" y="22.2" width="23" height="1.8" fill="#333"/>
</g>
<g transform="translate(1870.0,507.0)">
<rect x="0" y="1" width="23" height="22" fill="url(#hh)"/>
<path d="M0,1 H23 V8 H18 V23 H5 V8 H0 Z" fill="#434343"/>
<rect x="0" y="0" width="23" height="1.8" fill="#333"/>
<rect x="0" y="22.2" width="23" height="1.8" fill="#333"/>
</g>
<g transform="translate(1913.2,507.0)">
<rect x="0" y="1" width="23" height="22" fill="url(#hh)"/>
<path d="M0,1 H23 L18,9 V23 H5 V9 Z" fill="#434343"/>
<rect x="0" y="0" width="23" height="1.8" fill="#333"/>
<rect x="0" y="22.2" width="23" height="1.8" fill="#333"/>
</g>
<g transform="translate(1826.5,552.0)">
<rect x="0" y="1" width="23" height="22" fill="url(#hh)"/>
<rect x="5" y="1" width="13" height="22" fill="#434343"/>
<rect x="0" y="0" width="23" height="1.8" fill="#333"/>
<rect x="0" y="22.2" width="23" height="1.8" fill="#333"/>
</g>
<g transform="translate(1870.0,552.0)">
<rect x="0" y="1" width="23" height="22" fill="url(#hh)"/>
<rect x="5" y="1" width="13" height="22" fill="#434343"/>
<rect x="7.5" y="1" width="8" height="16" fill="#cfcfcf"/>
<rect x="0" y="0" width="23" height="1.8" fill="#333"/>
<rect x="0" y="22.2" width="23" height="1.8" fill="#333"/>
</g>
<g transform="translate(1913.5,552.0)">
<rect x="0" y="1" width="23" height="22" fill="url(#hh)"/>
<rect x="5" y="1" width="13" height="22" fill="url(#thd)"/>
<rect x="4.5" y="1" width="1.6" height="22" fill="#434343"/><rect x="16.9" y="1" width="1.6" height="22" fill="#434343"/>
<rect x="0" y="0" width="23" height="1.8" fill="#333"/>
<rect x="0" y="22.2" width="23" height="1.8" fill="#333"/>
</g>
<g transform="translate(1826.5,597.0)">
<rect x="0" y="1" width="23" height="22" fill="url(#hh)"/>
<rect x="5" y="1" width="13" height="22" fill="url(#thd)"/>
<rect x="4.5" y="1" width="1.6" height="22" fill="#434343"/><rect x="16.9" y="1" width="1.6" height="22" fill="#434343"/>
<rect x="0" y="0" width="23" height="1.8" fill="#333"/>
<rect x="0" y="22.2" width="23" height="1.8" fill="#333"/>
</g>
<g transform="translate(1870.0,597.0)">
<rect x="0" y="1" width="23" height="22" fill="url(#hh)"/>
<rect x="5" y="1" width="13" height="15" fill="url(#thd)"/>
<rect x="5" y="16" width="13" height="7" fill="#434343"/>
<rect x="4.5" y="1" width="1.6" height="22" fill="#434343"/><rect x="16.9" y="1" width="1.6" height="22" fill="#434343"/>
<rect x="0" y="0" width="23" height="1.8" fill="#333"/>
<rect x="0" y="22.2" width="23" height="1.8" fill="#333"/>
</g>
<g transform="translate(1826.5,642.0)">
<rect x="0" y="1" width="23" height="22" fill="url(#hh)"/>
<rect x="5" y="1" width="13" height="16" fill="#434343"/>
<rect x="0" y="0" width="23" height="1.8" fill="#333"/>
<rect x="0" y="22.2" width="23" height="1.8" fill="#333"/>
</g>
<g transform="translate(1870.0,642.0)">
<rect x="0" y="1" width="23" height="22" fill="url(#hh)"/>
<path d="M5,1 H18 V16 L11.5,22 L5,16 Z" fill="#434343"/>
<rect x="0" y="0" width="23" height="1.8" fill="#333"/>
<rect x="0" y="22.2" width="23" height="1.8" fill="#333"/>
</g>
<rect x="1699.5" y="311" width="21" height="21" rx="1.5" fill="#f4f4f4" stroke="#b4b4b4" stroke-width="1.5"/>
<circle cx="1704" cy="315.5" r="2.6" fill="none" stroke="#b8c6d8" stroke-width="1.2"/>
<rect x="1736.3" y="301.5" width="33" height="38.7" fill="#98cbea"/>
<rect x="1743" y="311" width="21" height="21" rx="1" fill="#cfe6f4" stroke="#6f8aa0" stroke-width="1.5"/>
<circle cx="1748.7" cy="316.5" r="3" fill="none" stroke="#7a93aa" stroke-width="1.2"/>
<circle cx="1758.6" cy="316.5" r="3" fill="none" stroke="#7a93aa" stroke-width="1.2"/>
<circle cx="1748.7" cy="326.5" r="3" fill="none" stroke="#7a93aa" stroke-width="1.2"/>
<circle cx="1758.6" cy="326.5" r="3" fill="none" stroke="#7a93aa" stroke-width="1.2"/>
<path d="M1704,354.5 L1704,374 L1708.5,369.5 L1712,377.5 L1715,376 L1711.5,368.5 L1717.5,368 Z" fill="#e8e8ea" stroke="#1a1a1a" stroke-width="1.4" stroke-linejoin="round"/>
<path d="M1826.5,360.5 L1838.5,372 M1838.5,360.5 L1826.5,372" stroke="#555" stroke-width="2.8"/>
<path d="M1828,450 V472 M1849,450 V472" stroke="#13284e" stroke-width="3"/>
<path d="M1831,461.2 H1846" stroke="#333" stroke-width="1.5"/><path d="M1830.5,461.2 L1835,458 V464.4 Z M1846.5,461.2 L1842,458 V464.4 Z" fill="#333"/>
<path d="M1963,459.3 H1972 L1967.5,464.5 Z" fill="#222"/>
<path d="M2004,459 L2008,454 H2017 L2013,459 Z" fill="none" stroke="#333" stroke-width="1.3"/>
<path d="M2010,459 V450 M2008,452 L2010,449.5 L2012,452" fill="none" stroke="#333" stroke-width="1.3"/>
<path d="M2008,467 L2013,462 H2023 L2018,467 Z" fill="#9cc8f0" stroke="#3a78c0" stroke-width="1.3"/>
<path d="M2015,467 V473 M2013,471 L2015,473.5 L2017,471" fill="none" stroke="#3a78c0" stroke-width="1.3"/>
<path d="M1999,465 V471 H2004 M2002,469 L2004.5,471 L2002,473" fill="none" stroke="#111" stroke-width="1.5"/>
<path d="M1838.5,716 H1609 V786" fill="none" stroke="#9a9a9a" stroke-width="2"/>
<path d="M1589,790 H1631 M1589,928 H1631" stroke="#e8453c" stroke-width="2"/>
<path d="M1609,797 V921" stroke="#4a86c8" stroke-width="2.2"/>
<path d="M1609,792 L1604.5,801 H1613.5 Z M1609,926 L1604.5,917 H1613.5 Z" fill="#4a86c8"/>
<rect x="1640" y="791.5" width="63" height="137" rx="3" fill="#c8c8c8" stroke="#999" stroke-width="3.5"/>
<path d="M1650,806.5 H1693.5" stroke="#999" stroke-width="3"/>
<path d="M1657,818.6 H1688" stroke="#999" stroke-width="3"/>
<path d="M1650,830.7 H1693.5" stroke="#999" stroke-width="3"/>
<path d="M1657,842.8 H1688" stroke="#999" stroke-width="3"/>
<path d="M1650,854.9 H1693.5" stroke="#999" stroke-width="3"/>
<path d="M1657,867.0 H1688" stroke="#999" stroke-width="3"/>
<path d="M1650,879.1 H1693.5" stroke="#999" stroke-width="3"/>
<path d="M1657,891.2 H1688" stroke="#999" stroke-width="3"/>
<path d="M1650,903.3 H1693.5" stroke="#999" stroke-width="3"/>
<path d="M1657,915.4 H1688" stroke="#999" stroke-width="3"/>
<path d="M1638.5,938.5 V961 M1704.5,938.5 V961" stroke="#e8453c" stroke-width="2"/>
<path d="M1645,949.8 H1698" stroke="#4a86c8" stroke-width="2.2"/>
<path d="M1641,949.8 L1649.5,945.3 V954.3 Z M1702,949.8 L1693.5,945.3 V954.3 Z" fill="#4a86c8"/>
<path d="M1711,949.8 H1838.5" stroke="#9a9a9a" stroke-width="2"/>
<path d="M2030,713 H2039.5 L2034.8,718.5 Z" fill="#222"/>
<path d="M2030,946.5 H2039.5 L2034.8,952 Z" fill="#b8b8b8"/>
<circle cx="1571.3" cy="1352" r="9" fill="#111"/>
<circle cx="1571.3" cy="1346.8" r="1.8" fill="#fff"/><path d="M1569,1350 H1572.8 V1356.5 H1574 V1358 H1568.5 V1356.5 H1569.8 V1351.5 H1569 Z" fill="#fff"/>
</svg>

<div class="a" style="left:1845px;top:701px;width:182px;height:31px;background:#fff;border:1px solid #d0d0d0;box-sizing:border-box;"></div>
<div class="dl" style="left:1851px;top:707px;">7 mm</div>
<div class="a" style="left:1845px;top:934px;width:182px;height:30px;background:#fff;border:1px solid #d0d0d0;box-sizing:border-box;"></div>
<div class="dl" style="left:1851px;top:940px;color:#a0a0a0;">3.332 mm</div>

<div class="dl" style="left:1569px;top:992px;">Thread Type</div>
<div class="dl" style="left:1569px;top:1037px;">Size</div>
<div class="dl" style="left:1569px;top:1082px;">Designation</div>
<div class="dl" style="left:1569px;top:1127px;">Class</div>
<div class="dl" style="left:1569px;top:1172px;">Direction</div>
<div class="dl" style="left:1569px;top:1216px;">Modeled</div>
<div class="dd" style="top:981px"><span>ISO Metric profile</span></div>
<div class="dd" style="top:1027px"><span>4.0 mm</span></div>
<div class="dd" style="top:1072px"><span>M4x0.7</span></div>
<div class="dd" style="top:1117px"><span>6H</span></div>
<div class="dd" style="top:1162px"><span>Right hand</span></div>
<div class="dtri" style="left:2034px;top:998px"></div>
<div class="dtri" style="left:2034px;top:1043px"></div>
<div class="dtri" style="left:2034px;top:1088px"></div>
<div class="dtri" style="left:2034px;top:1133px"></div>
<div class="dtri" style="left:2034px;top:1178px"></div>
<div class="a" style="left:1700px;top:1216px;width:19px;height:19px;border:1px solid #666;border-radius:3px;box-sizing:border-box;background:linear-gradient(#fafafa,#d8d8d8);"></div>

<div class="a" style="left:1565px;top:1265px;width:0;height:0;border-top:6px solid transparent;border-bottom:6px solid transparent;border-left:10px solid #222;"></div>
<div class="dl" style="left:1587px;top:1262px;font-weight:bold;letter-spacing:0.6px;">Objects To Cut</div>

<div class="a" style="left:1550px;top:1324px;width:522px;height:1px;background:#d6d6d6;"></div>
<div class="a" style="left:1861px;top:1337px;width:89px;height:28px;background:#e8e8e8;border:1px solid #c2c2c2;box-sizing:border-box;"></div>
<div class="dl" style="left:1892px;top:1342px;font-size:18px;color:#666;">OK</div>
<div class="a" style="left:1966px;top:1337px;width:89px;height:28px;background:#e8e8e8;border:1px solid #c2c2c2;box-sizing:border-box;"></div>
<div class="dl" style="left:1977px;top:1342px;font-size:18px;color:#555;">Cancel</div>

<!-- nav bar -->
<div class="a" style="left:1064px;top:1651px;width:380px;height:36px;background:#efefef;"></div>
<svg class="a" style="left:1040px;top:1640px" width="420" height="60" viewBox="1040 1640 420 60">
<defs>
 <linearGradient id="ngb" x1="0" y1="0" x2="0" y2="1"><stop offset="0" stop-color="#a9c5ea"/><stop offset="1" stop-color="#7fa3d6"/></linearGradient>
 <radialGradient id="nlens" cx="0.4" cy="0.35" r="0.7"><stop offset="0" stop-color="#ffffff"/><stop offset="1" stop-color="#b8d2d8"/></radialGradient>
</defs>
<g stroke-linejoin="round">
<!-- orbit -->
<path d="M1081,1681 V1660" stroke="#333" stroke-width="5"/>
<path d="M1081,1681 V1660" stroke="#e6e6e6" stroke-width="2.5"/>
<path d="M1077.5,1662 L1081,1656.5 L1084.5,1662 Z" fill="#e6e6e6" stroke="#333" stroke-width="1.3"/>
<path d="M1075,1674.5 C1066,1673 1066,1667 1075,1665.5 M1087,1665.5 C1095,1667 1095,1672.5 1086,1674.5 L1076,1675" fill="none" stroke="#333" stroke-width="2"/>
<path d="M1076,1671 L1070.5,1675 L1076,1679 Z" fill="#333"/>
<path d="M1101,1666.5 H1108.5 L1104.75,1671.5 Z" fill="#333"/>
<!-- look at -->
<path d="M1118.5,1667 H1142 V1680.5 H1118.5 Z" fill="#f4f4f4" stroke="#444" stroke-width="1.7"/>
<path d="M1121,1667 L1124,1661 L1130,1664 L1138,1658.5 L1141,1667" fill="#f4f4f4" stroke="#444" stroke-width="1.5"/>
<rect x="1123" y="1670.5" width="14.5" height="6.5" fill="#8a909c" stroke="#444" stroke-width="1.2"/>
<!-- hand -->
<path d="M1163,1680.5 L1158,1672 C1156.5,1669.5 1159,1668 1161,1670 L1163,1672 V1661 C1163,1659 1166,1659 1166,1661 V1668 V1658.5 C1166,1656.5 1169.5,1656.5 1169.5,1658.5 V1668 V1659 C1169.5,1657 1173,1657 1173,1659 V1668 V1661 C1173,1659 1176.5,1659 1176.5,1661 V1673 C1176.5,1677 1174.5,1680.5 1171,1680.5 Z" fill="#f2f2f2" stroke="#444" stroke-width="1.5"/>
<!-- zoom -->
<circle cx="1203.5" cy="1667.5" r="7" fill="url(#nlens)" stroke="#444" stroke-width="1.7"/>
<path d="M1208.5,1672.5 L1214,1678.5" stroke="#333" stroke-width="3.5" stroke-linecap="round"/>
<path d="M1213,1658.5 h7 M1216.5,1655 v7 M1213,1665 h7" stroke="#444" stroke-width="1.4"/>
<!-- zoom window -->
<rect x="1235" y="1658" width="21.5" height="22" fill="none" stroke="#555" stroke-width="1.3" stroke-dasharray="2.5 2"/>
<circle cx="1245" cy="1667.5" r="8" fill="url(#nlens)" stroke="#444" stroke-width="1.7"/>
<path d="M1250.5,1673 L1257,1679.5" stroke="#333" stroke-width="3.5" stroke-linecap="round"/>
<path d="M1267,1666.5 H1276.5 L1271.75,1671.5 Z" fill="#333"/>
<!-- display -->
<rect x="1297" y="1657" width="23.5" height="18" rx="2" fill="#d8dde5" stroke="#444" stroke-width="1.6"/>
<rect x="1300" y="1660" width="17.5" height="12" fill="url(#ngb)"/>
<path d="M1305,1675 V1678 H1300.5 V1680.5 H1316.5 V1678 H1312 V1675" fill="#e4e4e4" stroke="#444" stroke-width="1.2"/>
<path d="M1324,1666.5 H1333.5 L1328.75,1671.5 Z" fill="#333"/>
<!-- grid -->
<rect x="1343" y="1657" width="24" height="24" rx="1.5" fill="#9da3ad" stroke="#444" stroke-width="1.6"/>
<path d="M1347.8,1658 v22 M1352.6,1658 v22 M1357.4,1658 v22 M1362.2,1658 v22 M1344,1661.8 h22 M1344,1666.6 h22 M1344,1671.4 h22 M1344,1676.2 h22" stroke="#f4f4f4" stroke-width="1.3"/>
<path d="M1370.5,1666.5 H1380 L1375.25,1671.5 Z" fill="#333"/>
<!-- viewports -->
<rect x="1389.5" y="1658.5" width="23.5" height="20" rx="1.5" fill="#3c5a8a"/>
<rect x="1391.5" y="1660.5" width="9" height="7" fill="url(#ngb)"/><rect x="1402" y="1660.5" width="9" height="7" fill="url(#ngb)"/>
<rect x="1391.5" y="1669.5" width="9" height="7" fill="url(#ngb)"/><rect x="1402" y="1669.5" width="9" height="7" fill="url(#ngb)"/>
<path d="M1417,1666.5 H1426.5 L1421.75,1671.5 Z" fill="#333"/>
</g>
</svg>


<!-- bottom left panel -->
<div class="a" style="left:-1px;top:1650px;width:93px;height:38px;background:#efefef;border:1px solid #c9c9c9;box-sizing:border-box;"></div>
<div class="a" style="left:60px;top:1662px;width:14px;height:14px;border-radius:50%;background:#1e1e1e;"></div>
<div class="a" style="left:63px;top:1668px;width:8px;height:2px;background:#efefef;"></div>
<div class="a" style="left:66px;top:1665px;width:2px;height:8px;background:#efefef;"></div>
<div class="a" style="left:84px;top:1662px;width:1px;height:16px;background:#555;"></div>
<div class="a" style="left:87px;top:1665px;width:1px;height:10px;background:#aaa;"></div>

<!-- timeline -->
<div class="a" style="left:0;top:1694px;width:2269px;height:2px;background:#cdcdcd;"></div>
<div class="a" style="left:0;top:1696px;width:2269px;height:24px;background:#f0f0f0;"></div>
<svg class="a" style="left:0;top:1700px" width="2269" height="20" viewBox="0 1700 2269 20">
<rect x="3.0" y="1718.8" width="16.0" height="1.2" fill="#8a8a8a"/>
<rect x="34.0" y="1718.8" width="21.0" height="1.2" fill="#7a7a7a"/>
<rect x="75.6" y="1718.8" width="15.4" height="1.2" fill="#8a8a8a"/>
<rect x="112.5" y="1718.8" width="12.9" height="1.2" fill="#8a8a8a"/>
<rect x="142.6" y="1718.8" width="20.4" height="1.2" fill="#7a7a7a"/>
<rect x="183.0" y="1718.8" width="16.0" height="1.2" fill="#8a8a8a"/>
<rect x="214.8" y="1718.8" width="20.6" height="1.2" fill="#7a7a7a"/>
<rect x="256.0" y="1718.8" width="19.0" height="1.2" fill="#8a8a8a"/>
<rect x="286.0" y="1718.8" width="20.0" height="1.2" fill="#b8b8b8"/>
<rect x="327.0" y="1718.8" width="15.0" height="1.2" fill="#b0b0b0"/>
<rect x="359.0" y="1718.8" width="21.0" height="1.2" fill="#b0b0b0"/>
<rect x="396.0" y="1718.8" width="18.0" height="1.2" fill="#aaa"/>
<rect x="430.0" y="1718.8" width="22.0" height="1.2" fill="#b0b0b0"/>
<rect x="468.0" y="1718.8" width="16.0" height="1.2" fill="#b0b0b0"/>
<rect x="502.0" y="1718.8" width="18.0" height="1.2" fill="#b0b0b0"/>
<rect x="537.0" y="1718.8" width="19.0" height="1.2" fill="#b0b0b0"/>
<rect x="574.0" y="1718.8" width="16.0" height="1.2" fill="#b0b0b0"/>
<rect x="608.0" y="1718.8" width="18.0" height="1.2" fill="#b0b0b0"/>
<rect x="645.0" y="1718.8" width="17.0" height="1.2" fill="#b0b0b0"/>
<rect x="680.0" y="1718.8" width="16.0" height="1.2" fill="#b0b0b0"/>
<path d="M704,1710.5 H722 V1716 C722,1719 719,1720 713,1720 C707,1720 704,1719 704,1716 Z" fill="#5a5a5a"/>
</svg>
</body></html>
